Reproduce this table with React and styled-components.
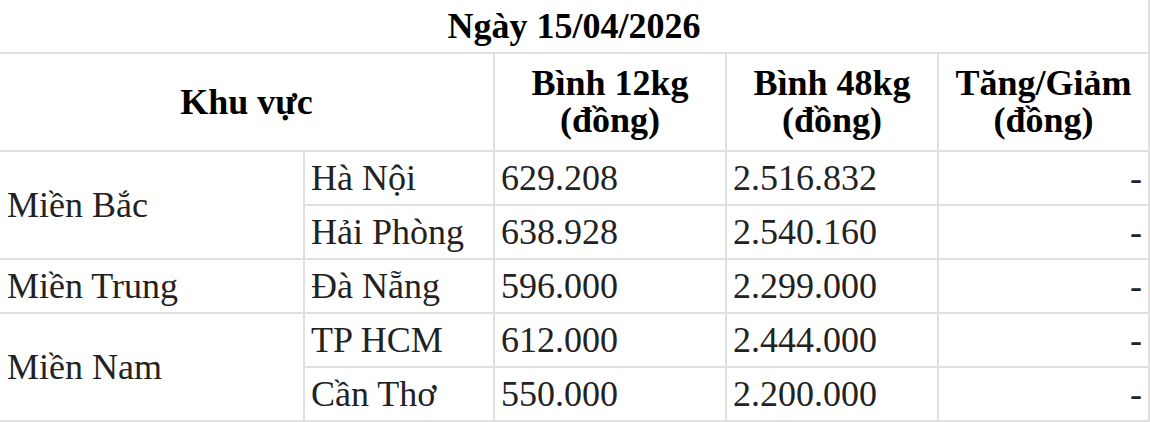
import React from "react";
import styled, { createGlobalStyle } from "styled-components";

const GlobalStyle = createGlobalStyle`
    html, body {
        margin: 0;
        padding: 0;
        background: #ffffff;
    }
`;

const line = "2px solid #e0e0e0";

const Table = styled.table`
    width: 1149px;
    border-collapse: collapse;
    table-layout: fixed;
    font-family: "Liberation Serif", "Times New Roman", serif;
    font-size: 36px;
    color: #222222;
`;

const TitleCell = styled.th`
    border-bottom: ${line};
    border-right: ${line};
    padding: 6px 0;
    line-height: 40px;
    font-weight: 700;
    color: #000000;
    text-align: center;
`;

const HeadCell = styled.th`
    border: ${line};
    border-left: ${props => (props.$first ? "none" : line)};
    padding: 11px 6px;
    line-height: 37px;
    font-weight: 700;
    color: #000000;
    text-align: center;
    vertical-align: middle;
`;

const Cell = styled.td`
    border: ${line};
    border-left: ${props => (props.$first ? "none" : line)};
    padding: 6px 6px 6px ${props => (props.$first ? "7px" : "6px")};
    line-height: 40px;
    text-align: ${props => props.$align || "left"};
    vertical-align: middle;
    white-space: nowrap;
`;

const regions = [
    {
        name: "Miền Bắc",
        cities: [
            { city: "Hà Nội", small: "629.208", big: "2.516.832", change: "-" },
            { city: "Hải Phòng", small: "638.928", big: "2.540.160", change: "-" },
        ],
    },
    {
        name: "Miền Trung",
        cities: [{ city: "Đà Nẵng", small: "596.000", big: "2.299.000", change: "-" }],
    },
    {
        name: "Miền Nam",
        cities: [
            { city: "TP HCM", small: "612.000", big: "2.444.000", change: "-" },
            { city: "Cần Thơ", small: "550.000", big: "2.200.000", change: "-" },
        ],
    },
];

export default function App() {
    return (
        <>
            <GlobalStyle />
            <Table>
                <colgroup>
                    <col style={{ width: 304 }} />
                    <col style={{ width: 190 }} />
                    <col style={{ width: 232 }} />
                    <col style={{ width: 212 }} />
                    <col style={{ width: 211 }} />
                </colgroup>
                <thead>
                    <tr>
                        <TitleCell colSpan={5}>Ngày 15/04/2026</TitleCell>
                    </tr>
                    <tr>
                        <HeadCell $first colSpan={2}>Khu vực</HeadCell>
                        <HeadCell>Bình 12kg<br />(đồng)</HeadCell>
                        <HeadCell>Bình 48kg<br />(đồng)</HeadCell>
                        <HeadCell>Tăng/Giảm<br />(đồng)</HeadCell>
                    </tr>
                </thead>
                <tbody>
                    {regions.map(region =>
                        region.cities.map((row, i) => (
                            <tr key={row.city}>
                                {i === 0 && (
                                    <Cell $first rowSpan={region.cities.length}>
                                        {region.name}
                                    </Cell>
                                )}
                                <Cell>{row.city}</Cell>
                                <Cell>{row.small}</Cell>
                                <Cell>{row.big}</Cell>
                                <Cell $align="right">{row.change}</Cell>
                            </tr>
                        ))
                    )}
                </tbody>
            </Table>
        </>
    );
}
